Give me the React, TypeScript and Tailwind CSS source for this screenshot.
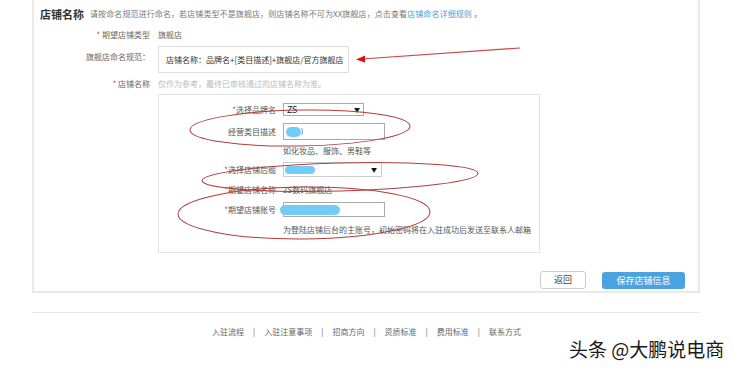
import React from "react";

const font = { fontFamily: '"Noto Sans CJK SC", "Noto Sans", sans-serif' };

function Star() {
  return <span className="text-[#e4393c]">*</span>;
}

function Blob({ w, h }: { w: number; h: number }) {
  return (
    <span
      className="inline-block rounded-full bg-[#72ccf7] blur-[0.6px]"
      style={{ width: w, height: h }}
    />
  );
}

export default function App() {
  return (
    <div className="relative w-[733px] h-[370px] overflow-hidden bg-white" style={font}>
      {/* card */}
      <div className="ml-[32px] w-[668px] h-[293px] border-x-2 border-b-2 border-[#e9e9e9] flex flex-col">
        <div className="mt-[6px] ml-[6px] h-[16px] flex items-center gap-[6px]">
          <span className="text-[11px] font-bold text-[#333] leading-none">店铺名称</span>
          <span className="text-[8px] text-[#777] leading-none tracking-[0.1px]">
            请按命名规范进行命名，若店铺类型不是旗舰店，则店铺名称不可为XX旗舰店，点击查看
            <span className="text-[#4aa0d8]">店铺命名详细规则</span> 。
          </span>
        </div>

        <div className="mt-[6px] h-[14px] flex items-center text-[8px]">
          <div className="w-[116px] text-right text-[#666]">
            <Star /> 期望店铺类型
          </div>
          <div className="ml-[8px] text-[#666]">旗舰店</div>
        </div>

        <div className="mt-[4px] flex items-start text-[8px]">
          <div className="w-[116px] text-right text-[#666] mt-[5px] leading-[12px]">旗舰店命名规范：</div>
          <div className="ml-[8px] w-[191px] h-[27px] border border-[#dedede] flex items-center pl-[7px] text-[#333]">
            店铺名称：品牌名+[类目描述]+旗舰店/官方旗舰店
          </div>
        </div>

        <div className="mt-[5px] h-[12px] flex items-center text-[8px]">
          <div className="w-[116px] text-right text-[#666]">
            <Star /> 店铺名称
          </div>
          <div className="ml-[8px] text-[#bbb]">仅作为参考，最终已审核通过的店铺名称为准。</div>
        </div>

        <div className="mt-[4px] ml-[124px] w-[382px] h-[159px] border border-[#e3e3e3] flex flex-col text-[8px] text-[#555]">
          <div className="mt-[8px] h-[13px] flex items-center">
            <div className="w-[117px] text-right"><Star />选择品牌名</div>
            <div className="ml-[7px] w-[81px] h-[13px] border border-[#aaa] flex items-center justify-between px-[3px] text-[#111] text-[9px]">
              <span>ZS</span>
              <span className="text-[6px]">▼</span>
            </div>
          </div>
          <div className="mt-[7px] h-[17px] flex items-center">
            <div className="w-[117px] text-right">经营类目描述</div>
            <div className="ml-[7px] w-[102px] h-[17px] border border-[#aaa] flex items-center pl-[2px] text-[#333]">
              <Blob w={15} h={10} />
              <span className="text-[7px]">)</span>
            </div>
          </div>
          <div className="mt-[5px] h-[12px] flex items-center">
            <div className="ml-[124px]">如化妆品、服饰、男鞋等</div>
          </div>
          <div className="mt-[5px] h-[15px] flex items-center">
            <div className="w-[117px] text-right"><Star />选择店铺后缀</div>
            <div className="ml-[7px] w-[99px] h-[15px] border border-[#ccc] flex items-center justify-between pl-[1px] pr-[4px]">
              <Blob w={30} h={8} />
              <span className="text-[6px] text-[#111]">▼</span>
            </div>
          </div>
          <div className="mt-[7px] h-[12px] flex items-center">
            <div className="w-[117px] text-right"><Star />期望店铺名称</div>
            <div className="ml-[7px]">ZS数码旗舰店</div>
          </div>
          <div className="mt-[6px] h-[15px] flex items-center">
            <div className="w-[117px] text-right"><Star />期望店铺账号</div>
            <div className="ml-[4px] w-[105px] h-[15px] flex items-center">
              <Blob w={60} h={10} />
              <div className="ml-[-57px] w-[102px] h-[15px] border border-[#aaa]" />
            </div>
          </div>
          <div className="mt-[7px] h-[12px] flex items-center">
            <div className="ml-[124px]">为登陆店铺后台的主账号，初始密码将在入驻成功后发送至联系人邮箱</div>
          </div>
        </div>

        <div className="mt-[18px] flex justify-end items-start gap-[16px] pr-[13px]">
          <div className="w-[46px] h-[18px] border border-[#ccc] rounded-[3px] flex items-center justify-center text-[9px] text-[#444]">
            返回
          </div>
          <div className="w-[83px] h-[17px] mt-[1px] rounded-[3px] bg-[#4aa3e0] flex items-center justify-center text-[9px] text-white">
            保存店铺信息
          </div>
        </div>
      </div>

      {/* footer */}
      <div className="mt-[19px] ml-[32px] w-[668px] h-[1px] bg-[#e6e6e6]" />
      <div className="mt-[13px] flex justify-center items-center gap-[9px] text-[8px] text-[#666] h-[12px]">
        <span>入驻流程</span><span>|</span>
        <span>入驻注意事项</span><span>|</span>
        <span>招商方向</span><span>|</span>
        <span>资质标准</span><span>|</span>
        <span>费用标准</span><span>|</span>
        <span>联系方式</span>
      </div>

      {/* watermark */}
      <div
        className="absolute left-[569px] top-[336px] text-[19px] leading-[26px] text-[#1a1a1a] whitespace-nowrap"
        style={{ textShadow: "0 0 2px #fff, 0 0 2px #fff" }}
      >
        头条 @大鹏说电商
      </div>

      {/* annotations */}
      <svg className="absolute left-0 top-0 pointer-events-none" width="733" height="370">
        <line x1="520" y1="48" x2="362" y2="59" stroke="#c94848" strokeWidth="1.2" />
        <polygon points="356,59.5 365,55.5 365,62.5" fill="#e01010" />
        <g fill="none" stroke="#b23c3c" strokeWidth="1">
          <ellipse cx="300" cy="128" rx="110" ry="18" transform="rotate(-1 300 128)" />
          <ellipse cx="340" cy="177" rx="138" ry="14" transform="rotate(-1.5 340 177)" />
          <ellipse cx="304" cy="213" rx="126" ry="26" transform="rotate(-0.5 304 213)" />
        </g>
      </svg>
    </div>
  );
}
